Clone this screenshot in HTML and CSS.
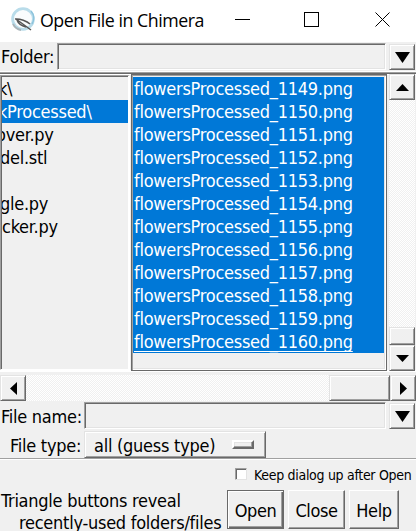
FILE: index.html
```
<!DOCTYPE html>
<html lang="en">
<head>
<meta charset="utf-8">
<title>Open File in Chimera</title>
<link rel="stylesheet" href="styles.css">
</head>
<body>
<div class="window">
  <header class="titlebar">
    <svg class="logo" width="24" height="25" viewBox="0 0 24 25"><circle cx="12" cy="12" r="10.4" fill="#fafcfd" stroke="#b9dcea" stroke-width="2.8"/><path d="M20 4a11 11 0 0 1 1 13" fill="none" stroke="#8cc3dc" stroke-width="1.5"/><path d="M2 17a11 11 0 0 0 8 6" fill="none" stroke="#a9b4b9" stroke-width="1.8"/><path d="M4 12C9 11.500 16 14 19 17M5 12l15 11M6 13c1 3 5 6 9 7" fill="none" stroke="#555" stroke-width="1.5"/></svg>
    <h1>Open File in Chimera</h1>
    <svg class="winctl" width="164" height="16" viewBox="0 0 164 16" fill="none" stroke="#000"><path d="M0 7.500h15M69.500 .500h14v14h-14z" shape-rendering="crispEdges"/><path d="M140.500 .500l14 14M154.500 .500l-14 14"/></svg>
  </header>
  <div class="row folder">
    <label class="lbl">Folder:</label><div class="entry"></div>
    <button class="arrow"><svg width="15" height="11"><path d="M0 0h15L7.500 11z"/></svg></button>
  </div>
  <div class="lists">
    <div class="list left">
      <div class="item o0"><span>k\</span></div>
      <div class="item sel o0"><span>kProcessed\</span></div>
      <div class="item o1"><span>over.py</span></div>
      <div class="item"><span>del.stl</span></div>
      <div class="item"></div>
      <div class="item"><span>gle.py</span></div>
      <div class="item o2"><span>cker.py</span></div>
    </div>
    <div class="list right">
      <div class="item sel">flowersProcessed_1149.png</div>
      <div class="item sel">flowersProcessed_1150.png</div>
      <div class="item sel">flowersProcessed_1151.png</div>
      <div class="item sel">flowersProcessed_1152.png</div>
      <div class="item sel">flowersProcessed_1153.png</div>
      <div class="item sel">flowersProcessed_1154.png</div>
      <div class="item sel">flowersProcessed_1155.png</div>
      <div class="item sel">flowersProcessed_1156.png</div>
      <div class="item sel">flowersProcessed_1157.png</div>
      <div class="item sel">flowersProcessed_1158.png</div>
      <div class="item sel">flowersProcessed_1159.png</div>
      <div class="item sel"><span class="active">flowersProcessed_1160.png</span></div>
    </div>
    <div class="vscroll">
      <button class="arrow"><svg width="13" height="7"><path d="M0 7h13L6.500 0z"/></svg></button>
      <div class="trough"></div>
      <div class="thumb"></div>
      <button class="arrow"><svg width="13" height="7"><path d="M0 0h13L6.500 7z"/></svg></button>
    </div>
  </div>
  <div class="hscroll">
    <button class="arrow"><svg width="7" height="13"><path d="M7 0v13L0 6.500z"/></svg></button>
    <div class="trough"></div>
    <div class="thumb"></div>
    <button class="arrow"><svg width="7" height="13"><path d="M0 0v13l7-6.500z"/></svg></button>
  </div>
  <div class="row name">
    <label class="lbl">File name:</label><div class="entry"></div>
    <button class="arrow"><svg width="15" height="11"><path d="M0 0h15L7.500 11z"/></svg></button>
  </div>
  <div class="row type">
    <label class="lbl">File type:</label>
    <div class="option"><span>all (guess type)</span><i class="indicator"></i></div>
  </div>
  <footer class="footer">
    <label class="keep"><i class="check"></i><span>Keep dialog up after Open</span></label>
    <div class="bottom">
      <div class="hint"><p class="h1">Triangle buttons reveal</p><p class="h2">recently-used folders/files</p></div>
      <button class="btn open">Open</button>
      <button class="btn close">Close</button>
      <button class="btn help">Help</button>
    </div>
  </footer>
</div>
</body>
</html>
```
FILE: styles.css
```
* { box-sizing: border-box; margin: 0; padding: 0; }
body { width: 416px; height: 531px; overflow: hidden; background: #f0f0f0; color: #000; font: 18px/23px "DejaVu Sans Condensed", "DejaVu Sans", sans-serif; font-stretch: condensed; letter-spacing: -0.26px; white-space: nowrap; }
button { font: inherit; letter-spacing: -0.4px; color: inherit; }
svg { display: block; flex: none; }
.window { width: 416px; height: 531px; display: flex; flex-direction: column; }
.titlebar { height: 42px; flex: none; background: #fff; display: flex; padding: 7px 0 0 11px; }
.titlebar h1 { font: 400 17.800px/26px "Open Sans", sans-serif; letter-spacing: -0.46px; margin-left: 5px; width: 195px; }
.winctl { margin-top: 5px; }
.row { display: flex; flex: none; }
.lbl { line-height: 27px; padding-left: 1px; flex: none; }
.entry { height: 27px; flex: none; border: 1px solid; border-color: #a0a0a0 #fff #fff #a0a0a0; box-shadow: inset 1px 1px #696969, inset -1px -1px #e3e3e3; }
.arrow { width: 26px; height: 26px; flex: none; display: flex; align-items: center; justify-content: center; }
.arrow, .thumb, .option { background: #f0f0f0; border: 1px solid; border-color: #e3e3e3 #696969 #696969 #e3e3e3; box-shadow: inset 1px 1px #fff, inset -1px -1px #a0a0a0; }
.folder { height: 30px; padding-top: 1px; border-bottom: 1px solid #fff; }
.folder .lbl { width: 57px; }
.folder .entry { width: 329px; margin-right: 3px; }
.folder .arrow { margin-top: 1px; }
.lists { height: 300px; flex: none; display: flex; padding-top: 2px; border-top: 1px solid #a0a0a0; box-shadow: inset 0 1px #696969, inset 0 2px #fff; border-bottom: 2px solid #fff; }
.list { overflow: hidden; flex: none; }
.item { height: 23px; }
.item.sel { background: #0078d7; color: #fff; }
.left { width: 130px; height: 295px; border: 1px solid; border-color: #a0a0a0 #fff #fff #a0a0a0; border-right-width: 2px; box-shadow: inset 1px 1px #696969; padding: 1px 0 0 1px; }
.left .item { overflow: hidden; }
.left .item span { margin-left: -2px; }
.left .o0 span { margin-left: -4px; }
.left .o1 span { margin-left: -6px; }
.left .o2 span { margin-left: 0; }
.right { width: 256px; height: 297px; margin: -1px 0 0 1px; border: 1px solid #696969; box-shadow: inset 1px 1px #a0a0a0, inset -1px -1px #fff, inset -2px -2px #e3e3e3; padding: 2px 2px 0 1px; }
.right .item { padding-left: 1px; }
.active { text-decoration: underline; text-underline-offset: 3px; text-decoration-thickness: 1px; text-decoration-skip-ink: none; }
.vscroll { width: 26px; height: 297px; margin: -1px 0 0 2px; display: flex; flex-direction: column; flex: none; }
.trough { flex: 1; background: repeating-conic-gradient(#fff 0 25%, #f0f0f0 0 50%) 0 0 / 2px 2px; }
.vscroll .thumb { height: 18px; }
.hscroll { height: 28px; padding-top: 3px; display: flex; flex: none; }
.hscroll .thumb { width: 61px; height: 26px; }
.hscroll .trough { height: 26px; }
.name { height: 31px; padding-top: 2px; }
.name .lbl { width: 84px; line-height: 29px; }
.name .entry { width: 302px; margin-right: 3px; }
.name .arrow { margin-top: 1px; }
.type { height: 28px; border-bottom: 1px solid #a0a0a0; }
.type .lbl { width: 84px; padding-left: 10px; line-height: 29px; }
.option { width: 182px; height: 27px; display: flex; align-items: center; padding-left: 9px; }
.option span { width: 138px; position: relative; top: 1px; }
.indicator { width: 22px; height: 9px; border: 2px solid; border-color: #fff #696969 #696969 #fff; box-shadow: inset -1px -1px #a0a0a0, inset 1px 1px #e3e3e3; }
.footer { flex: 1; border-top: 1px solid #fff; }
.keep { display: flex; padding: 6px 0 0 235px; height: 30px; font-size: 14px; line-height: 19px; letter-spacing: -0.3px; }
.check { width: 12px; height: 12px; margin: 2px 7px 0 0; background: #fff; border: 1px solid; border-color: #a0a0a0 #e3e3e3 #e3e3e3 #a0a0a0; box-shadow: inset 1px 1px #696969; flex: none; }
.bottom { display: flex; }
.hint { width: 227px; flex: none; padding-left: 1px; line-height: 22px; }
.hint .h2 { padding-left: 18px; }
.btn { height: 39px; flex: none; background: #f0f0f0; border: 1px solid; border-color: #fff #696969 #696969 #fff; box-shadow: inset -1px -1px #a0a0a0; margin-right: 4px; padding-top: 1px; }
.open { width: 57px; border-color: #696969; box-shadow: inset 1px 1px #fff, inset -1px -1px #696969, inset -2px -2px #a0a0a0; }
.close { width: 57px; }
.help { width: 50px; }
```
